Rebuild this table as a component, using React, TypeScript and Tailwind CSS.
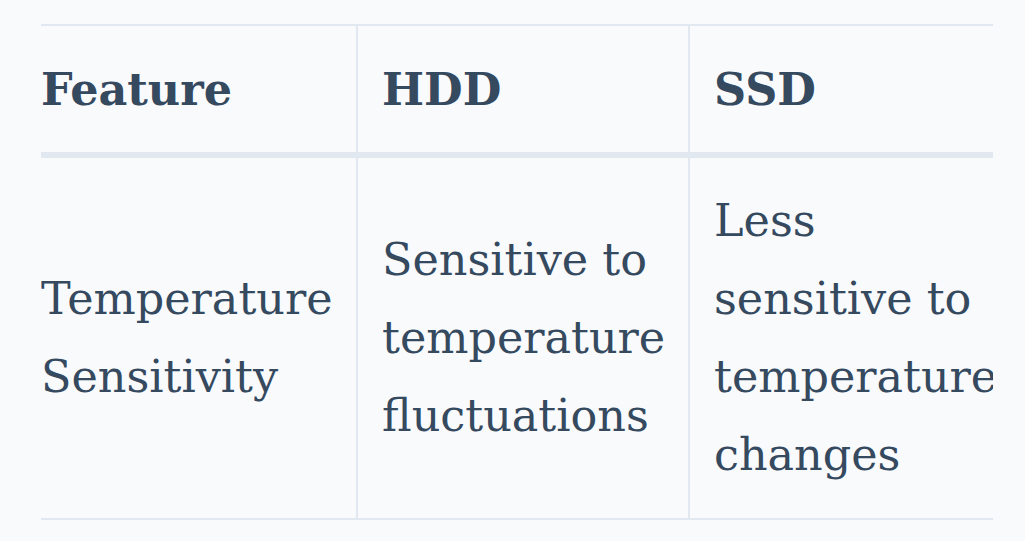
const rows = [
  {
    feature: 'Temperature Sensitivity',
    hdd: 'Sensitive to temperature fluctuations',
    ssd: 'Less sensitive to temperature changes',
  },
];

export default function App() {
  return (
    <div className="min-h-[541px] bg-[#f8fafc] pt-[24px] font-['DejaVu_Serif',serif] text-[#35495f]">
      <div className="ml-[41px] w-[952px] overflow-hidden">
        <table className="table-fixed border-collapse w-[980px] text-[44.5px] leading-[78px]">
          <colgroup>
            <col className="w-[316px]" />
            <col className="w-[332px]" />
            <col className="w-[332px]" />
          </colgroup>
          <thead>
            <tr className="border-t-2 border-b-[6px] border-[#e2e8f0]">
              <th className="text-left font-bold py-[24px] pr-[24px] align-middle">Feature</th>
              <th className="text-left font-bold py-[24px] pl-[24px] pr-[20px] border-l-2 border-[#e2e8f0] align-middle">HDD</th>
              <th className="text-left font-bold py-[24px] pl-[24px] pr-[20px] border-l-2 border-[#e2e8f0] align-middle">SSD</th>
            </tr>
          </thead>
          <tbody>
            {rows.map((r) => (
              <tr key={r.feature} className="border-b-2 border-[#e2e8f0]">
                <td className="py-[24px] pr-[20px] align-middle">{r.feature}</td>
                <td className="py-[24px] pl-[24px] pr-[20px] border-l-2 border-[#e2e8f0] align-middle">{r.hdd}</td>
                <td className="py-[24px] pl-[24px] pr-[20px] border-l-2 border-[#e2e8f0] align-middle">{r.ssd}</td>
              </tr>
            ))}
          </tbody>
        </table>
      </div>
    </div>
  );
}
